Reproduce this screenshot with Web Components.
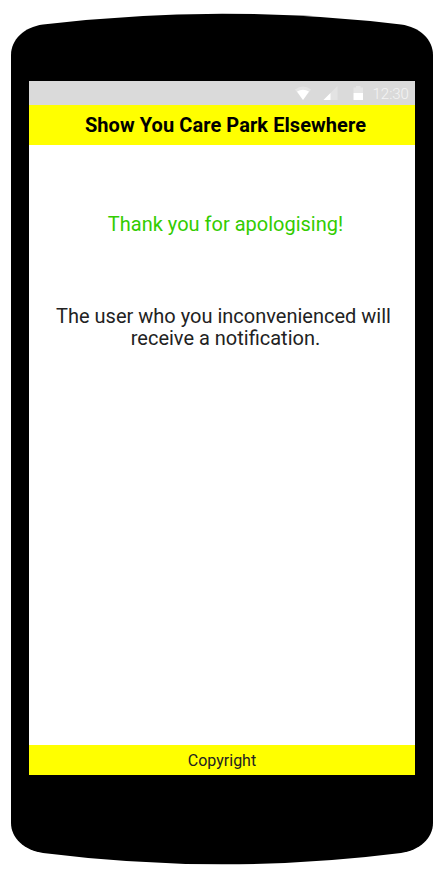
<!DOCTYPE html>
<html lang="en">
<head>
<meta charset="utf-8">
<title>Show You Care Park Elsewhere</title>
<style>
html, body { margin: 0; background: #fff; }
body { font-family: Roboto, "Liberation Sans", sans-serif; }
</style>
</head>
<body>
<phone-frame>
  <status-bar time="12:30"></status-bar>
  <app-header>Show You Care Park Elsewhere</app-header>
  <thank-you-message>
    <span slot="title">Thank you for apologising!</span>
    <span slot="first">The user who you inconvenienced will</span>
    <span slot="second">receive a notification.</span>
  </thank-you-message>
  <app-footer>Copyright</app-footer>
</phone-frame>
<script>
const define = (name, html, setup) => customElements.define(name, class extends HTMLElement {
  constructor() {
    super();
    this.attachShadow({ mode: 'open' }).innerHTML = html;
  }
  connectedCallback() { if (setup) setup(this); }
});

define('phone-frame', `
<style>
:host { display: grid; width: 442px; height: 872px; overflow: hidden; }
svg, .screen { grid-area: 1 / 1; }
svg { display: block; }
.screen { display: flex; flex-direction: column; margin: 81px 27px 97px 29px; background: #fff; z-index: 1; }
</style>
<svg width="442" height="872" viewBox="0 0 442 872" aria-hidden="true">
  <path d="M11 55C11 40 24 27 43 24.6Q132 13.700 222 13.700T401 24.600C420 27 433 40 433 55V823C433 838 420 850 401 853Q312 864.300 222 864.300T43 853C24 850 11 838 11 823Z"/>
</svg>
<div class="screen"><slot></slot></div>`);

define('status-bar', `
<style>
:host { display: flex; height: 24px; background: #dadada; justify-content: flex-end; align-items: center; padding-right: 6px; color: #f4f4f4; box-sizing: border-box; }
svg { display: block; margin-right: 9px; }
span { font-size: 15px; line-height: 24px; font-weight: 300; padding-top: 2px; width: 36.500px; white-space: nowrap; }
</style>
<svg width="69" height="24" viewBox="0 0 69 24" aria-hidden="true">
  <path fill="#e5e5e5" d="M0 8.500Q8 2.500 16 8.500L8 19Z"/>
  <path fill="#fff" d="M2 10.500Q8 7 14 10.500L8 19Z"/>
  <path fill="#e3e3e3" d="M28.500 19L42.500 5V19Z"/>
  <path fill="#fff" d="M28.500 19L35.500 12V19Z"/>
  <path fill="#e6e6e6" d="M58.500 6.500H61V5H65.500V6.500H68V12H58.500Z"/>
  <path fill="#fff" d="M58.500 12H68V19H58.500Z"/>
</svg>
<span></span>`, el => { el.shadowRoot.querySelector('span').textContent = el.getAttribute('time'); });

define('app-header', `
<style>
:host { display: flex; height: 40px; background: #ff0; justify-content: center; align-items: center; padding-left: 7px; box-sizing: border-box; color: #000; font-size: 20px; font-weight: 700; line-height: 24px; letter-spacing: .07px; white-space: nowrap; }
</style><slot></slot>`);

define('thank-you-message', `
<style>
:host { display: flex; flex: 1; flex-direction: column; align-items: center; box-sizing: border-box; padding: 67px 0 0 7px; white-space: nowrap; }
h1 { margin: 0 0 69px; font-size: 20px; line-height: 24px; font-weight: 400; color: #3c0; }
p { margin: 0; font-size: 20px; line-height: 22px; font-weight: 400; color: #222; display: flex; flex-direction: column; align-items: center; }
.first { margin-right: 4px; }
</style>
<h1><slot name="title"></slot></h1>
<p><span class="first"><slot name="first"></slot></span><span><slot name="second"></slot></span></p>`);

define('app-footer', `
<style>
:host { display: flex; height: 30px; background: #ff0; justify-content: center; align-items: center; padding-top: 2px; box-sizing: border-box; color: #222; font-size: 16px; line-height: 20px; }
</style><slot></slot>`);
</script>
</body>
</html>
